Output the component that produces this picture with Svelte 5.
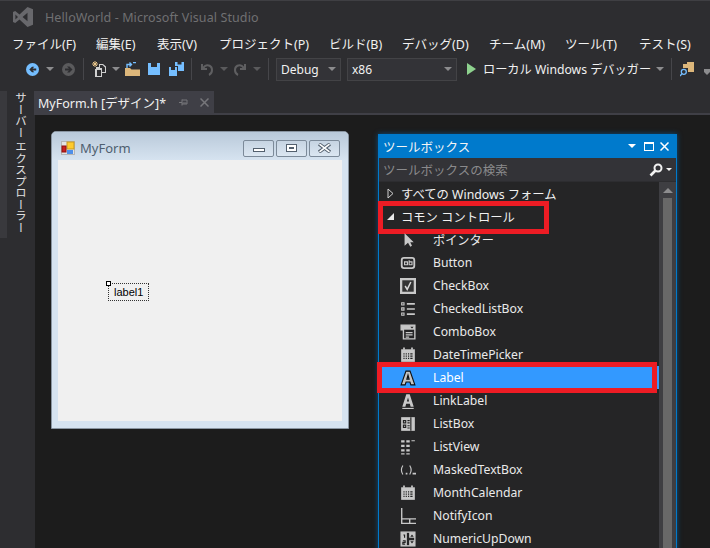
<script>
  const menus = [
    { label: "ファイル(F)", width: 84 },
    { label: "編集(E)", width: 61 },
    { label: "表示(V)", width: 62 },
    { label: "プロジェクト(P)", width: 110 },
    { label: "ビルド(B)", width: 73 },
    { label: "デバッグ(D)", width: 87 },
    { label: "チーム(M)", width: 76 },
    { label: "ツール(T)", width: 74 },
    { label: "テスト(S)", width: 60 }
  ];

  const tools = [
    { name: "ポインター", icon: "pointer" },
    { name: "Button", icon: "button" },
    { name: "CheckBox", icon: "check" },
    { name: "CheckedListBox", icon: "checklist" },
    { name: "ComboBox", icon: "combo" },
    { name: "DateTimePicker", icon: "date" },
    { name: "Label", icon: "label" },
    { name: "LinkLabel", icon: "link" },
    { name: "ListBox", icon: "listbox" },
    { name: "ListView", icon: "listview" },
    { name: "MaskedTextBox", icon: "masked" },
    { name: "MonthCalendar", icon: "month" },
    { name: "NotifyIcon", icon: "notify" },
    { name: "NumericUpDown", icon: "numeric" }
  ];
</script>

<div class="window">
  <header class="titlebar">
    <svg class="logo" width="22" height="22" viewBox="0 0 22 22">
      <path d="M15.5 1 L21 3.3 V18.7 L15.5 21 L7.5 13.6 L3.2 17 L1 16 V6 L3.2 5 L7.5 8.4 Z M15.5 6.8 L10.6 11 L15.5 15.2 Z M3.4 8.4 V13.6 L6 11 Z" fill="#68686c" fill-rule="evenodd" />
    </svg>
    <span class="apptitle">HelloWorld - Microsoft Visual Studio</span>
  </header>

  <nav class="menubar">
    {#each menus as m}
      <span class="menu" style="width: {m.width}px">{m.label}</span>
    {/each}
  </nav>

  <div class="toolbar">
    <span class="grip"></span>
    <svg class="ic" style="margin-left: 10px" width="13" height="13" viewBox="0 0 14 14">
      <circle cx="7" cy="7" r="7" fill="#75beff" />
      <path d="M11 6H7L9 4H6.500L3.500 7l3 3H9L7 8h4z" fill="#2d2d30" />
    </svg>
    <span class="caret" style="margin-left: 7px"></span>
    <svg class="ic" style="margin-left: 8px" width="13" height="13" viewBox="0 0 13 13">
      <circle cx="6.500" cy="6.500" r="6.500" fill="#5a5a5c" />
      <path d="M3 5.500h4L5 3.500h2.500L10.500 6.500l-3 3H5l2-2H3z" fill="#2d2d30" />
    </svg>
    <span class="sep" style="margin-left: 8px"></span>

    <svg class="ic" style="margin-left: 8px" width="14" height="16" viewBox="0 0 14 16">
      <path d="M4 6h3V3h4l3 2.500V12h-4v4H3V8h1zM5 9v6h4V9zM8 4v3h2v4h3V6.500L10.500 4z" fill="#d0d0d0" fill-rule="evenodd" />
      <path d="M3 0v6M0 3h6M1 1l4 4M5 1L1 5" stroke="#e8c58a" stroke-width="1" />
    </svg>
    <span class="caret" style="margin-left: 6px"></span>
    <svg class="ic" style="margin-left: 5px" width="15" height="14" viewBox="0 0 15 14">
      <path d="M0 6h5l1.500 1.500H15V14H0z" fill="#dcb67a" />
      <path d="M2 6V2.500h4M4.500 0.500L6.500 2.500 4.500 4.500M8 0.500h3" stroke="#75beff" stroke-width="1.400" fill="none" />
    </svg>
    <svg class="ic" style="margin-left: 8px" width="12" height="12" viewBox="0 0 12 12">
      <path d="M0 0h12v12H0zM3 0v4h6V0z" fill="#75beff" fill-rule="evenodd" />
    </svg>
    <svg class="ic" style="margin-left: 9px" width="15" height="14" viewBox="0 0 15 14">
      <path d="M0 5h8v9H0zM2 5v3h4V5z" fill="#75beff" fill-rule="evenodd" />
      <path d="M6 0h9v9H9V4H6zM8.500 0v2.500h4V0z" fill="#75beff" fill-rule="evenodd" />
    </svg>
    <span class="sep" style="margin-left: 7px"></span>

    <svg class="ic" style="margin-left: 8px" width="13" height="13" viewBox="0 0 13 13">
      <path d="M2 1v5h5M2 6l3-3c3-2 7 0 7 4 0 2-1 4-3 5" stroke="#5f5f61" stroke-width="2" fill="none" />
    </svg>
    <span class="caret dim" style="margin-left: 7px"></span>
    <svg class="ic" style="margin-left: 6px" width="13" height="13" viewBox="0 0 13 13">
      <path d="M11 1v5H6M11 6L8 3C5 1 1 3 1 7c0 2 1 4 3 5" stroke="#5f5f61" stroke-width="2" fill="none" />
    </svg>
    <span class="caret dim" style="margin-left: 6px"></span>
    <span class="sep" style="margin-left: 7px"></span>

    <div class="combo debug">Debug<span class="caret"></span></div>
    <div class="combo platform">x86<span class="caret"></span></div>

    <svg class="ic" style="margin-left: 10px" width="9" height="12" viewBox="0 0 9 12">
      <path d="M0 0L9 6L0 12z" fill="#8ed28e" />
    </svg>
    <span class="debugger">ローカル Windows デバッガー</span>
    <span class="caret"></span>
    <span class="sep" style="margin-left: 7px"></span>
    <svg class="ic" style="margin-left: 8px" width="14" height="15" viewBox="0 0 14 15">
      <path d="M3 2h4V0h7v10H8V6H3z" fill="#dcb67a" />
      <circle cx="3.800" cy="9.800" r="2.500" fill="none" stroke="#75beff" stroke-width="1.300" />
      <path d="M2 11.500L0 14" stroke="#75beff" stroke-width="1.400" />
    </svg>
    <span class="more"></span>
  </div>

  <div class="workspace">
    <aside class="sidebar">
      <div class="sidestrip"></div>
      <div class="sidetab">サーバー エクスプローラー</div>
    </aside>

    <div class="docs">
      <div class="tabs">
        <div class="tab">
          <span>MyForm.h [デザイン]*</span>
          <svg class="pin" width="9" height="9" viewBox="0 0 9 9">
            <path d="M0 4.500h3M3 1.500v6M3 2h5v4H3M3.500 5h4" stroke="#77777b" fill="none" />
          </svg>
          <svg class="tabclose" width="9" height="9" viewBox="0 0 9 9">
            <path d="M0.500 0.500l8 8M8.500 0.500l-8 8" stroke="#77777b" stroke-width="1.500" />
          </svg>
        </div>
      </div>

      <div class="editor">
        <div class="form">
          <div class="formtitle">
            <svg width="14" height="14" viewBox="0 0 14 14">
              <rect x="0.500" y="0.500" width="13" height="13" fill="#e3e3e3" stroke="#b5b5b5" />
              <rect x="6" y="1" width="7" height="7" fill="#ffcb2e" stroke="#c79a20" />
              <rect x="1" y="5" width="4" height="6" fill="#c92020" stroke="#8c1010" />
              <rect x="6" y="9" width="6" height="4" fill="#4f8fe8" />
            </svg>
            <span class="formname">MyForm</span>
            <div class="winbtns">
              <span class="winbtn"><i class="min"></i></span>
              <span class="winbtn"><i class="max"></i></span>
              <span class="winbtn">
                <svg width="13" height="10" viewBox="0 0 13 10">
                  <path d="M1 1L12 9M12 1L1 9" stroke="#53606e" stroke-width="3.600" />
                  <path d="M1.500 1.200L11.500 8.800M11.500 1.200L1.500 8.800" stroke="#fff" stroke-width="1.600" />
                </svg>
              </span>
            </div>
          </div>
          <div class="client">
            <div class="label1"><i class="handle"></i>label1</div>
          </div>
        </div>

        <section class="toolbox">
          <div class="boxtitle">
            <span>ツールボックス</span>
            <span class="dots"></span>
            <span class="whitecaret"></span>
            <span class="restore"></span>
            <svg width="9" height="9" viewBox="0 0 9 9">
              <path d="M0.500 0.500l8 8M8.500 0.500l-8 8" stroke="#fff" stroke-width="1.500" />
            </svg>
          </div>

          <div class="search">
            <span class="hint">ツールボックスの検索</span>
            <svg width="14" height="14" viewBox="0 0 14 14">
              <circle cx="9" cy="5" r="3.500" fill="none" stroke="#f1f1f1" stroke-width="2" />
              <path d="M6.500 7.500L1.500 12.500" stroke="#f1f1f1" stroke-width="2.600" />
            </svg>
            <span class="searchcaret"></span>
          </div>

          <div class="boxbody">
            <div class="list">
              <div class="group">
                <svg width="7" height="11" viewBox="0 0 7 11"><path d="M1 1L6 5.500L1 10z" fill="none" stroke="#d0d0d0" /></svg>
                <span>すべての Windows フォーム</span>
              </div>
              <div class="group open">
                <svg width="7" height="7" viewBox="0 0 7 7"><path d="M7 0V7H0z" fill="#e8e8e8" /></svg>
                <span>コモン コントロール</span>
              </div>
              {#each tools as t}
                <div class="item" class:selected={t.name === "Label"}>
                  <svg class="toolicon" width="16" height="16" viewBox="1 1 14 14">
                    {#if t.icon === "pointer"}
                      <path d="M5 2L5 13L8 10.500L10 14L11.500 13L10 10H13z" fill="#c8c8c8" />
                    {:else if t.icon === "button"}
                      <rect x="2.500" y="3.500" width="11" height="9" rx="2" fill="none" stroke="#c8c8c8" stroke-width="1.600" />
                      <path d="M5 9.500h2.500V7H5zM9 5.500V9.500h2.500V7H9" fill="none" stroke="#c8c8c8" />
                    {:else if t.icon === "check"}
                      <rect x="2" y="2" width="12" height="12" fill="#333" stroke="#c8c8c8" stroke-width="2" />
                      <path d="M5.500 8L7.300 11L10.500 4.500" fill="none" stroke="#d8d8d8" stroke-width="1.300" />
                    {:else if t.icon === "checklist"}
                      <path d="M2.500 2.500h2v2h-2zM2.500 7h2v2h-2zM2.500 11.500h2v2h-2z" fill="none" stroke="#c8c8c8" />
                      <path d="M7 3.500h7M7 8h7M7 12.500h7" stroke="#c8c8c8" stroke-width="1.500" />
                    {:else if t.icon === "combo"}
                      <path d="M2 2h12v12H4V6H2z" fill="none" stroke="#c8c8c8" stroke-width="1.200" />
                      <path d="M2 2h12v4H2z" fill="#c8c8c8" />
                      <path d="M6 8.500h6M6 10.500h6M6 12.500h3" stroke="#c8c8c8" />
                      <path d="M10 3.500h3L11.500 5z" fill="#222" />
                    {:else if t.icon === "date" || t.icon === "month"}
                      <rect x="2" y="3" width="12" height="11" fill="#c8c8c8" />
                      <path d="M4.500 1.500v2M11.500 1.500v2" stroke="#c8c8c8" stroke-width="1.500" />
                      <path d="M4 7h1M6 7h1M8 7h1M10 7h2M4 9h1M6 9h1M8 9h1M10 9h2M4 11h1M6 11h1M8 11h1M10 11h2" stroke="#222" />
                    {:else if t.icon === "label"}
                      <path d="M6.200 2H9.800L14 14H10.500L9.700 11.500H6.300L5.500 14H2zM7 9h2L8 5.500z" fill="#c4c4c4" stroke="#111" fill-rule="evenodd" />
                    {:else if t.icon === "link"}
                      <path d="M6.500 2H9.500L13 13H10.300L9.600 10.500H6.400L5.700 13H3zM7 8.500h2L8 5z" fill="#c8c8c8" fill-rule="evenodd" />
                      <path d="M3 14.500h10" stroke="#c8c8c8" />
                    {:else if t.icon === "listbox"}
                      <path d="M2 2h12v12H2z" fill="#c8c8c8" />
                      <path d="M4 5h2v2H4zM4 9h2v2H4zM7.500 5h2M7.500 7h2M7.500 9.500h2M7.500 11.500h2M10.500 2v12" stroke="#222" stroke-width="1" fill="none" />
                    {:else if t.icon === "listview"}
                      <path d="M2 2h3v2H2zM6.500 2h3v2h-3zM11 2h3v1h-3zM2 6h3v2H2zM6.500 6h3v2h-3zM2 10h3v2H2zM6.500 10h3v2h-3zM2 13.500h3v1H2zM6.500 13.500h3v1h-3z" fill="#c8c8c8" />
                    {:else if t.icon === "masked"}
                      <path d="M3.500 4Q1 8 3.500 12M9.500 4Q12 8 9.500 12" fill="none" stroke="#c8c8c8" />
                      <path d="M6 10.500h1.500v1.500H6zM12 10.500h3v1.500h-3z" fill="#c8c8c8" />
                    {:else if t.icon === "notify"}
                      <path d="M2.500 1v13.500H15M2.500 10.500H15M9.500 10.500v4" fill="none" stroke="#c8c8c8" stroke-width="1.200" />
                    {:else if t.icon === "numeric"}
                      <rect x="2" y="2" width="12" height="12" fill="none" stroke="#c8c8c8" stroke-width="1.200" />
                      <path d="M2 2h5v12H2zM9 2h5v5H9zM9 9h5v5H9z" fill="#c8c8c8" />
                      <path d="M4 4.500h1v2.500M3.500 9.500h2v1.500h-2v1.500h2" fill="none" stroke="#222" />
                      <path d="M10 6l1.500-2L13 6zM10 10l1.500 2L13 10z" fill="#222" />
                    {/if}
                  </svg>
                  <span>{t.name}</span>
                </div>
              {/each}
            </div>
            <div class="scroll">
              <span class="uparrow"></span>
              <span class="thumb"></span>
            </div>
          </div>
        </section>
      </div>
    </div>
  </div>
</div>

<style>
  :global(body) {
    margin: 0;
    background: #2d2d30;
  }
  .window {
    width: 710px;
    height: 548px;
    overflow: hidden;
    background: #2d2d30;
    display: flex;
    flex-direction: column;
    font-family: "Noto Sans", "Noto Sans CJK JP", sans-serif;
    font-size: 12px;
    color: #f1f1f1;
    border-top: 1px solid #3f3f43;
    box-sizing: border-box;
  }
  .titlebar {
    height: 32px;
    display: flex;
    align-items: center;
    padding-left: 12px;
    flex: none;
  }
  .apptitle {
    margin-left: 11px;
    color: #707072;
    font-size: 12.5px;
    letter-spacing: 0.1px;
  }
  .menubar {
    height: 20px;
    display: flex;
    align-items: center;
    padding-left: 12px;
    flex: none;
    font-size: 12.500px;
    white-space: nowrap;
  }
  .menu {
    flex: none;
  }
  .toolbar {
    height: 28px;
    margin-top: 2px;
    display: flex;
    align-items: center;
    padding-left: 13px;
    flex: none;
    white-space: nowrap;
  }
  .grip {
    width: 4px;
    height: 20px;
    background-image: radial-gradient(#47474b 0.6px, transparent 0.7px);
    background-size: 2px 2px;
  }
  .ic {
    flex: none;
  }
  .caret {
    width: 0;
    height: 0;
    border: 4px solid transparent;
    border-top-color: #8c8c8e;
    border-bottom: 0;
    flex: none;
  }
  .caret.dim {
    border-top-color: #5a5a5c;
  }
  .sep {
    width: 1px;
    height: 22px;
    background: #46464a;
    flex: none;
  }
  .combo {
    height: 23px;
    box-sizing: border-box;
    border: 1px solid #434346;
    background: #333337;
    display: flex;
    align-items: center;
    justify-content: space-between;
    padding: 0 4px;
    font-size: 12px;
    flex: none;
  }
  .debug {
    width: 65px;
    margin-left: 7px;
  }
  .platform {
    width: 110px;
    margin-left: 6px;
  }
  .debugger {
    margin-left: 7px;
    width: 173px;
    flex: none;
    font-size: 12.200px;
  }
  .more {
    margin-left: 10px;
    width: 0;
    height: 0;
    border: 3.500px solid transparent;
    border-top-color: #8c8c8e;
    border-bottom: 0;
    margin-top: 8px;
    box-shadow: 0 -3px 0 0 #8c8c8e;
  }
  .workspace {
    flex: 1;
    display: flex;
    min-height: 0;
    margin-top: 8px;
  }
  .sidebar {
    width: 34px;
    flex: none;
    display: flex;
    align-items: flex-start;
  }
  .sidestrip {
    width: 7px;
    height: 147px;
    background: #39393d;
    flex: none;
  }
  .sidetab {
    margin-left: 5px;
    width: 16px;
    writing-mode: vertical-rl;
    color: #e0e0e0;
    font-size: 11.500px;
    line-height: 16px;
    white-space: nowrap;
    padding-top: 1px;
  }
  .docs {
    flex: 1;
    min-width: 0;
    display: flex;
    flex-direction: column;
  }
  .tabs {
    height: 22px;
    flex: none;
    border-bottom: 2px solid #3f3f46;
  }
  .tab {
    width: 180px;
    height: 22px;
    background: #3f3f46;
    display: flex;
    align-items: center;
    padding-left: 4px;
    box-sizing: border-box;
    font-size: 12.500px;
    white-space: nowrap;
  }
  .pin {
    margin-left: 13px;
    flex: none;
  }
  .tabclose {
    margin-left: 12px;
    flex: none;
  }
  .editor {
    flex: 1;
    min-height: 0;
    margin-left: 1px;
    background: #1c1c1c;
    display: flex;
    align-items: flex-start;
    padding: 16px 0 0 16px;
  }
  .form {
    width: 298px;
    height: 298px;
    flex: none;
    box-sizing: border-box;
    border: 1px solid #8a95a1;
    border-radius: 5px 5px 0 0;
    background: #d6e3f0;
    padding: 0 6px 7px;
    display: flex;
    flex-direction: column;
  }
  .formtitle {
    height: 24px;
    margin: 0 -6px;
    padding: 4px 8px 0 9px;
    background: linear-gradient(#b9c9d9, #d6e3f0);
    border-radius: 4px 4px 0 0;
    display: flex;
    align-items: center;
    flex: none;
  }
  .formname {
    margin-left: 5px;
    color: #4f5f70;
    font-size: 13px;
  }
  .winbtns {
    margin-left: auto;
    display: flex;
    gap: 2px;
  }
  .winbtn {
    width: 31px;
    height: 17px;
    box-sizing: border-box;
    border: 1px solid #7c8a99;
    border-radius: 2px;
    background: linear-gradient(#c6d4e2, #dbe6f1);
    display: flex;
    align-items: center;
    justify-content: center;
  }
  .min {
    width: 10px;
    height: 2px;
    margin-top: 4px;
    border: 1px solid #53606e;
    background: #fff;
  }
  .max {
    width: 9px;
    height: 6px;
    border: 1px solid #53606e;
    background: #53606e;
    box-shadow: inset 0 0 0 2px #fff;
  }
  .client {
    flex: 1;
    background: #f0f0f0;
    padding: 123px 0 0 50px;
  }
  .label1 {
    position: relative;
    width: 41px;
    height: 18px;
    box-sizing: border-box;
    border: 1px dotted #333;
    color: #000;
    font-family: "Liberation Sans", sans-serif;
    font-size: 11px;
    line-height: 16px;
    padding-left: 5px;
  }
  .handle {
    position: absolute;
    left: -3px;
    top: -3px;
    width: 3px;
    height: 3px;
    border: 1px solid #000;
    background: #fff;
  }
  .toolbox {
    width: 299px;
    margin-left: 29px;
    margin-top: 3px;
    height: 420px;
    flex: none;
    box-sizing: border-box;
    border: 1px solid #007acc;
    border-bottom: 0;
    border-top: 0;
    box-shadow: 0 0 5px #0b4f80;
    background: #252526;
    display: flex;
    flex-direction: column;
  }
  .boxtitle {
    height: 24px;
    margin: 0 -1px;
    background: #007acc;
    flex: none;
    display: flex;
    align-items: center;
    padding: 0 8px 0 5px;
    font-size: 12.500px;
    color: #f4f4f4;
  }
  .dots {
    flex: 1;
    height: 6px;
    margin: 0 8px;
    background-image: radial-gradient(#59a8dc 0.6px, transparent 0.7px);
    background-size: 2px 2px;
  }
  .whitecaret {
    width: 0;
    height: 0;
    border: 4px solid transparent;
    border-top-color: #fff;
    border-bottom: 0;
    margin: 0 8px 0 2px;
  }
  .restore {
    width: 8px;
    height: 6px;
    border: 1px solid #fff;
    border-top-width: 2px;
    margin-right: 6px;
  }
  .search {
    height: 24px;
    box-sizing: border-box;
    border-bottom: 1px solid #2d2d30;
    background: #333337;
    display: flex;
    align-items: center;
    padding: 0 4px;
    flex: none;
  }
  .hint {
    color: #8a8a8c;
    font-size: 12.500px;
    flex: 1;
  }
  .searchcaret {
    width: 0;
    height: 0;
    border: 3px solid transparent;
    border-top-color: #f1f1f1;
    border-bottom: 0;
    margin-left: 3px;
  }
  .boxbody {
    flex: 1;
    min-height: 0;
    display: flex;
  }
  .list {
    flex: 1;
    min-width: 0;
    position: relative;
    font-size: 12.200px;
  }
  .group {
    height: 23px;
    display: flex;
    align-items: center;
    padding-left: 8px;
    gap: 7px;
    font-size: 12.300px;
    position: relative;
  }
  .group.open::after {
    content: "";
    position: absolute;
    left: -1px;
    top: -4px;
    width: 171px;
    height: 33px;
    box-sizing: border-box;
    border: 5px solid #ed1c24;
  }
  .item {
    height: 23px;
    display: flex;
    align-items: center;
    padding-left: 21px;
    position: relative;
    color: #eaeaea;
  }
  .item span {
    margin-left: 17px;
  }
  .toolicon {
    flex: none;
  }
  .item.selected {
    background: #3399ff;
    color: #fff;
  }
  .item.selected::after {
    content: "";
    position: absolute;
    left: -2px;
    top: -4px;
    width: 280px;
    height: 31px;
    box-sizing: border-box;
    border: 5px solid #ed1c24;
  }
  .scroll {
    width: 17px;
    background: #3e3e42;
    flex: none;
    display: flex;
    flex-direction: column;
    align-items: center;
  }
  .uparrow {
    width: 0;
    height: 0;
    border: 5px solid transparent;
    border-bottom-color: #8c8c8e;
    border-top: 0;
    margin: 6px 0 5px;
  }
  .thumb {
    width: 9px;
    flex: 1;
    background: #686868;
  }
</style>
